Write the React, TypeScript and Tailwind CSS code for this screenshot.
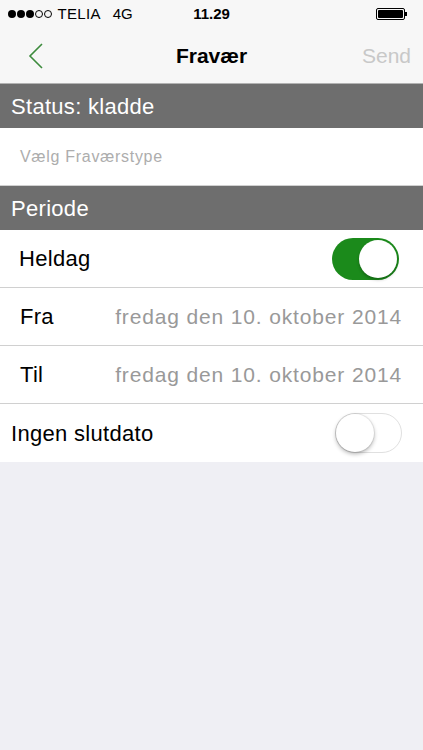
import React from 'react';

const font = { fontFamily: '"Liberation Sans", Arial, sans-serif' };

const Toggle: React.FC<{ on: boolean }> = ({ on }) =>
  on ? (
    <div className="flex h-[42px] w-[67px] items-center justify-end rounded-full bg-[#1b8a1b] p-[2px]">
      <div className="h-[38px] w-[38px] rounded-full bg-white shadow-[0_2px_3px_rgba(0,0,0,0.25)]" />
    </div>
  ) : (
    <div className="flex h-[40px] w-[67px] items-center justify-start rounded-full border border-[#e0e0e0] bg-white">
      <div className="h-[38px] w-[38px] rounded-full bg-white shadow-[0_2px_4px_rgba(0,0,0,0.3),0_0_0_1px_rgba(0,0,0,0.06)]" />
    </div>
  );

const App: React.FC = () => {
  return (
    <div className="flex min-h-[750px] flex-col bg-[#efeff4]" style={font}>
      {/* status + nav bar */}
      <div className="border-b border-[#b2b2b2] bg-[#f7f7f7]">
        <div className="relative flex h-[28px] items-center px-[8px] text-[15px] text-black">
          <div className="flex items-center gap-[1.5px]">
            {[0, 1, 2].map((i) => (
              <span key={i} className="h-[7.5px] w-[7.5px] rounded-full bg-black" />
            ))}
            {[0, 1].map((i) => (
              <span key={i} className="h-[7.5px] w-[7.5px] rounded-full border border-black" />
            ))}
          </div>
          <span className="ml-[6px] tracking-[0.3px]">TELIA</span>
          <span className="ml-[12px]">4G</span>
          <span className="absolute left-1/2 -translate-x-1/2 font-bold">11.29</span>
          <div className="ml-auto mr-[8px] flex items-center">
            <div className="h-[12px] w-[29px] rounded-[2px] border border-black p-[1px]">
              <div className="h-full w-full rounded-[1px] bg-black" />
            </div>
            <div className="h-[4px] w-[2px] bg-black" />
          </div>
        </div>
        <div className="relative flex h-[55px] items-center px-[12px]">
          <svg width="16" height="26" viewBox="0 0 16 26" className="ml-[16px]">
            <path d="M14 1 L2 13 L14 25" fill="none" stroke="#3d8b3d" strokeWidth="1.6" />
          </svg>
          <span className="absolute left-1/2 -translate-x-1/2 text-[21px] font-bold text-black">Fravær</span>
          <span className="ml-auto text-[21px] text-[#c8c8c8]">Send</span>
        </div>
      </div>

      <div className="flex h-[44px] items-center bg-[#6e6e6e] px-[11px] text-[22px] tracking-[0.3px] text-white">
        Status: kladde
      </div>
      <div className="flex h-[58px] items-center border-b border-[#d0d0d0] bg-white px-[20px] text-[16px] tracking-[0.7px] text-[#adadad]">
        Vælg Fraværstype
      </div>
      <div className="flex h-[44px] items-center bg-[#6e6e6e] px-[11px] text-[22px] tracking-[0.3px] text-white">
        Periode
      </div>

      <div className="bg-white tracking-[0.3px]">
        <div className="flex h-[58px] items-center border-b border-[#d0d0d0] pl-[19px] pr-[24px]">
          <span className="text-[22px] text-black">Heldag</span>
          <div className="ml-auto">
            <Toggle on />
          </div>
        </div>
        <div className="flex h-[58px] items-center border-b border-[#d0d0d0] pl-[20px] pr-[21px]">
          <span className="text-[22px] text-black">Fra</span>
          <span className="ml-auto text-[21px] tracking-[0.85px] text-[#999999]">fredag den 10. oktober 2014</span>
        </div>
        <div className="flex h-[58px] items-center border-b border-[#d0d0d0] pl-[20px] pr-[21px]">
          <span className="text-[22px] text-black">Til</span>
          <span className="ml-auto text-[21px] tracking-[0.85px] text-[#999999]">fredag den 10. oktober 2014</span>
        </div>
        <div className="flex h-[58px] items-center pl-[11px] pr-[21px]">
          <span className="text-[22px] text-black">Ingen slutdato</span>
          <div className="ml-auto">
            <Toggle on={false} />
          </div>
        </div>
      </div>
    </div>
  );
};

export default App;
